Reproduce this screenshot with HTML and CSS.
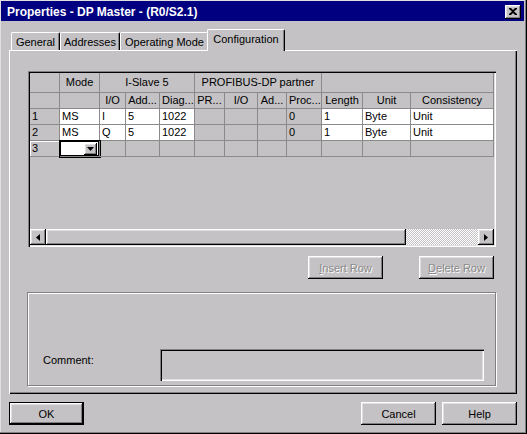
FILE: index.html
```html
<!DOCTYPE html>
<html>
<head>
<meta charset="utf-8">
<title>Properties - DP Master</title>
<link rel="stylesheet" href="styles.css">
</head>
<body>
<div class="window">
  <div class="titlebar">
    <span class="title">Properties - DP Master - (R0/S2.1)</span>
    <span class="close"><svg width="8" height="7" viewBox="0 0 8 7"><path d="M0 0h2l2 2 2-2h2v1L5 3.5 8 6v1H6L4 5 2 7H0V6l3-2.5L0 1z" fill="#000"/></svg></span>
  </div>
  <div class="tabs">
    <div class="tab t-general">General</div>
    <div class="tab t-addr">Addresses</div>
    <div class="tab t-mode">Operating Mode</div>
    <div class="tab t-conf active">Configuration</div>
  </div>
  <div class="panel">
    <div class="grid">
      <div class="cells">
        <div class="c h r1"></div>
        <div class="c h r1">Mode</div>
        <div class="c h r1 span3">I-Slave 5</div>
        <div class="c h r1 span4">PROFIBUS-DP partner</div>
        <div class="c h r1 span3"></div>

        <div class="c h"></div>
        <div class="c h"></div>
        <div class="c h">I/O</div>
        <div class="c h">Add...</div>
        <div class="c h">Diag...</div>
        <div class="c h">PR...</div>
        <div class="c h">I/O</div>
        <div class="c h">Ad...</div>
        <div class="c h">Proc...</div>
        <div class="c h">Length</div>
        <div class="c h">Unit</div>
        <div class="c h">Consistency</div>

        <div class="c">1</div>
        <div class="c w">MS</div>
        <div class="c w">I</div>
        <div class="c w">5</div>
        <div class="c w">1022</div>
        <div class="c"></div>
        <div class="c"></div>
        <div class="c"></div>
        <div class="c">0</div>
        <div class="c w">1</div>
        <div class="c w">Byte</div>
        <div class="c w">Unit</div>

        <div class="c">2</div>
        <div class="c w">MS</div>
        <div class="c w">Q</div>
        <div class="c w">5</div>
        <div class="c w">1022</div>
        <div class="c"></div>
        <div class="c"></div>
        <div class="c"></div>
        <div class="c">0</div>
        <div class="c w">1</div>
        <div class="c w">Byte</div>
        <div class="c w">Unit</div>

        <div class="c sel">3</div>
        <div class="c combo"><span class="combo-field"></span><span class="combo-btn"><svg width="7" height="4" viewBox="0 0 7 4"><path d="M0 0h7L3.5 4z" fill="#000"/></svg></span></div>
        <div class="c"></div>
        <div class="c"></div>
        <div class="c"></div>
        <div class="c"></div>
        <div class="c"></div>
        <div class="c"></div>
        <div class="c"></div>
        <div class="c"></div>
        <div class="c"></div>
        <div class="c"></div>
      </div>
      <div class="grid-empty"></div>
      <div class="hscroll">
        <div class="sb-btn"><svg width="4" height="7" viewBox="0 0 4 7"><path d="M4 0v7L0 3.5z" fill="#000"/></svg></div>
        <div class="sb-thumb"></div>
        <div class="sb-track"></div>
        <div class="sb-btn"><svg width="4" height="7" viewBox="0 0 4 7"><path d="M0 0v7l4-3.5z" fill="#000"/></svg></div>
      </div>
    </div>
    <div class="row-buttons">
      <button class="btn disabled"><u>I</u>nsert Row</button>
      <button class="btn disabled"><u>D</u>elete Row</button>
    </div>
    <div class="groupbox">
      <span class="label">Comment:</span>
      <div class="field"></div>
    </div>
  </div>
  <div class="footer">
    <button class="btn default">OK</button>
    <span class="spacer"></span>
    <button class="btn">Cancel</button>
    <button class="btn">Help</button>
  </div>
</div>
</body>
</html>
```
FILE: styles.css
```css
* { box-sizing: border-box; }
html, body { margin: 0; padding: 0; }
body {
  width: 527px;
  height: 434px;
  overflow: hidden;
  background: #c4c2c4;
  font-family: "Liberation Sans", Arial, sans-serif;
  font-size: 11px;
  color: #000;
}
.window {
  width: 527px;
  height: 434px;
  padding: 1px 0 0 1px;
  background: #c4c2c4;
  box-shadow: inset -1px -1px #000, inset -2px -2px #808080, inset 1px 1px #dfdfdf;
}
.titlebar {
  width: 523px;
  height: 20px;
  background: #000080;
  color: #fff;
  font-weight: bold;
  font-size: 12px;
  display: flex;
  align-items: center;
  justify-content: space-between;
  padding: 1px 3px 0 6px;
}
.close {
  width: 16px;
  height: 14px;
  background: #c4c2c4;
  display: flex;
  align-items: center;
  justify-content: center;
  box-shadow: inset -1px -1px #000, inset 1px 1px #fff, inset -2px -2px #808080, inset 2px 2px #dfdfdf;
}
.close svg { display: block; }

.tabs {
  display: flex;
  align-items: flex-end;
  height: 21px;
  margin: 8px 0 0 8px;
  padding-left: 2px;
}
.tab {
  height: 18px;
  border-top: 1px solid #fff;
  border-left: 1px solid #fff;
  border-right: 1px solid #000;
  border-radius: 2px 2px 0 0;
  box-shadow: inset -1px 0 #808080;
  display: flex;
  align-items: center;
  justify-content: center;
  white-space: nowrap;
  background: #c4c2c4;
}
.t-general { width: 49px; }
.t-addr { width: 60px; }
.t-mode { width: 89px; }
.t-conf { width: 78px; }
.tab.active {
  height: 22px;
  margin: 0 -2px -1px -2px;
  padding-bottom: 3px;
  position: relative;
  z-index: 1;
}

.panel {
  width: 508px;
  height: 344px;
  margin-left: 8px;
  padding: 21px 0 0 18px;
  box-shadow: inset 1px 1px #fff, inset -1px -1px #000, inset -2px -2px #808080;
}

.grid {
  width: 468px;
  height: 176px;
  margin-left: 1px;
  padding: 2px;
  display: flex;
  flex-direction: column;
  box-shadow: inset 1px 1px #808080, inset 2px 2px #000, inset -1px -1px #fff, inset -2px -2px #dfdfdf;
}
.cells {
  display: grid;
  grid-template-columns: 30px 40px 26px 34px 35px 30px 33px 29px 35px 41px 48px 83px;
  grid-template-rows: 20px 16px 16px 16px 16px;
}
.c {
  border-right: 1px solid #8a8a8a;
  border-bottom: 1px solid #8a8a8a;
  padding: 0 2px;
  line-height: 15px;
  white-space: nowrap;
  overflow: hidden;
}
.h { text-align: center; }
.r1 { line-height: 19px; }
.span3 { grid-column: span 3; }
.span4 { grid-column: span 4; }
.w { background: #fff; }
.sel { box-shadow: inset 1px 1px #fff; }
.combo {
  display: flex;
  background: #fff;
  box-shadow: 0 0 0 1px #000, inset 0 0 0 1px #000;
  padding: 2px 2px 1px 1px;
}
.combo-field { flex: 1; }
.combo-btn {
  width: 13px;
  background: #c4c2c4;
  display: flex;
  align-items: center;
  justify-content: center;
  box-shadow: inset -1px -1px #000, inset 1px 1px #fff, inset -2px -2px #808080, inset 2px 2px #dfdfdf;
}
.combo-btn svg, .sb-btn svg { display: block; }
.grid-empty { flex: 1; }
.hscroll {
  height: 16px;
  display: flex;
}
.sb-btn {
  width: 16px;
  height: 16px;
  display: flex;
  align-items: center;
  justify-content: center;
  background: #c4c2c4;
  box-shadow: inset -1px -1px #000, inset 1px 1px #fff, inset -2px -2px #808080, inset 2px 2px #dfdfdf;
}
.sb-thumb {
  width: 360px;
  height: 16px;
  background: #c4c2c4;
  box-shadow: inset -1px -1px #000, inset 1px 1px #fff, inset -2px -2px #808080, inset 2px 2px #dfdfdf;
}
.sb-track {
  flex: 1;
  background: repeating-conic-gradient(#fff 0 25%, #c4c2c4 0 50%) 0 0 / 2px 2px;
}

.btn {
  width: 75px;
  height: 23px;
  padding: 0;
  border: none;
  background: #c4c2c4;
  font-family: "Liberation Sans", Arial, sans-serif;
  font-size: 11px;
  color: #000;
  box-shadow: inset -1px -1px #000, inset 1px 1px #fff, inset -2px -2px #808080, inset 2px 2px #dfdfdf;
}
.btn.disabled {
  color: #8a8a8a;
  text-shadow: 1px 1px #fff;
}
.btn.default {
  border: 1px solid #000;
}
.row-buttons {
  width: 469px;
  margin-top: 9px;
  display: flex;
  justify-content: flex-end;
  gap: 36px;
  padding-right: 2px;
}
.groupbox {
  width: 469px;
  height: 94px;
  margin: 13px 0 0 0;
  border: 1px solid #808080;
  box-shadow: inset 1px 1px #fff, 1px 1px #fff;
  display: flex;
  align-items: flex-end;
  padding: 0 11px 4px 15px;
}
.label {
  margin-bottom: 15px;
}
.field {
  width: 324px;
  height: 32px;
  margin-left: auto;
  box-shadow: inset 1px 1px #808080, inset 2px 2px #000, inset -1px -1px #fff, inset -2px -2px #dfdfdf;
}
.footer {
  width: 508px;
  margin: 8px 0 0 8px;
  display: flex;
  gap: 6px;
}
.spacer { flex: 1; }
```
